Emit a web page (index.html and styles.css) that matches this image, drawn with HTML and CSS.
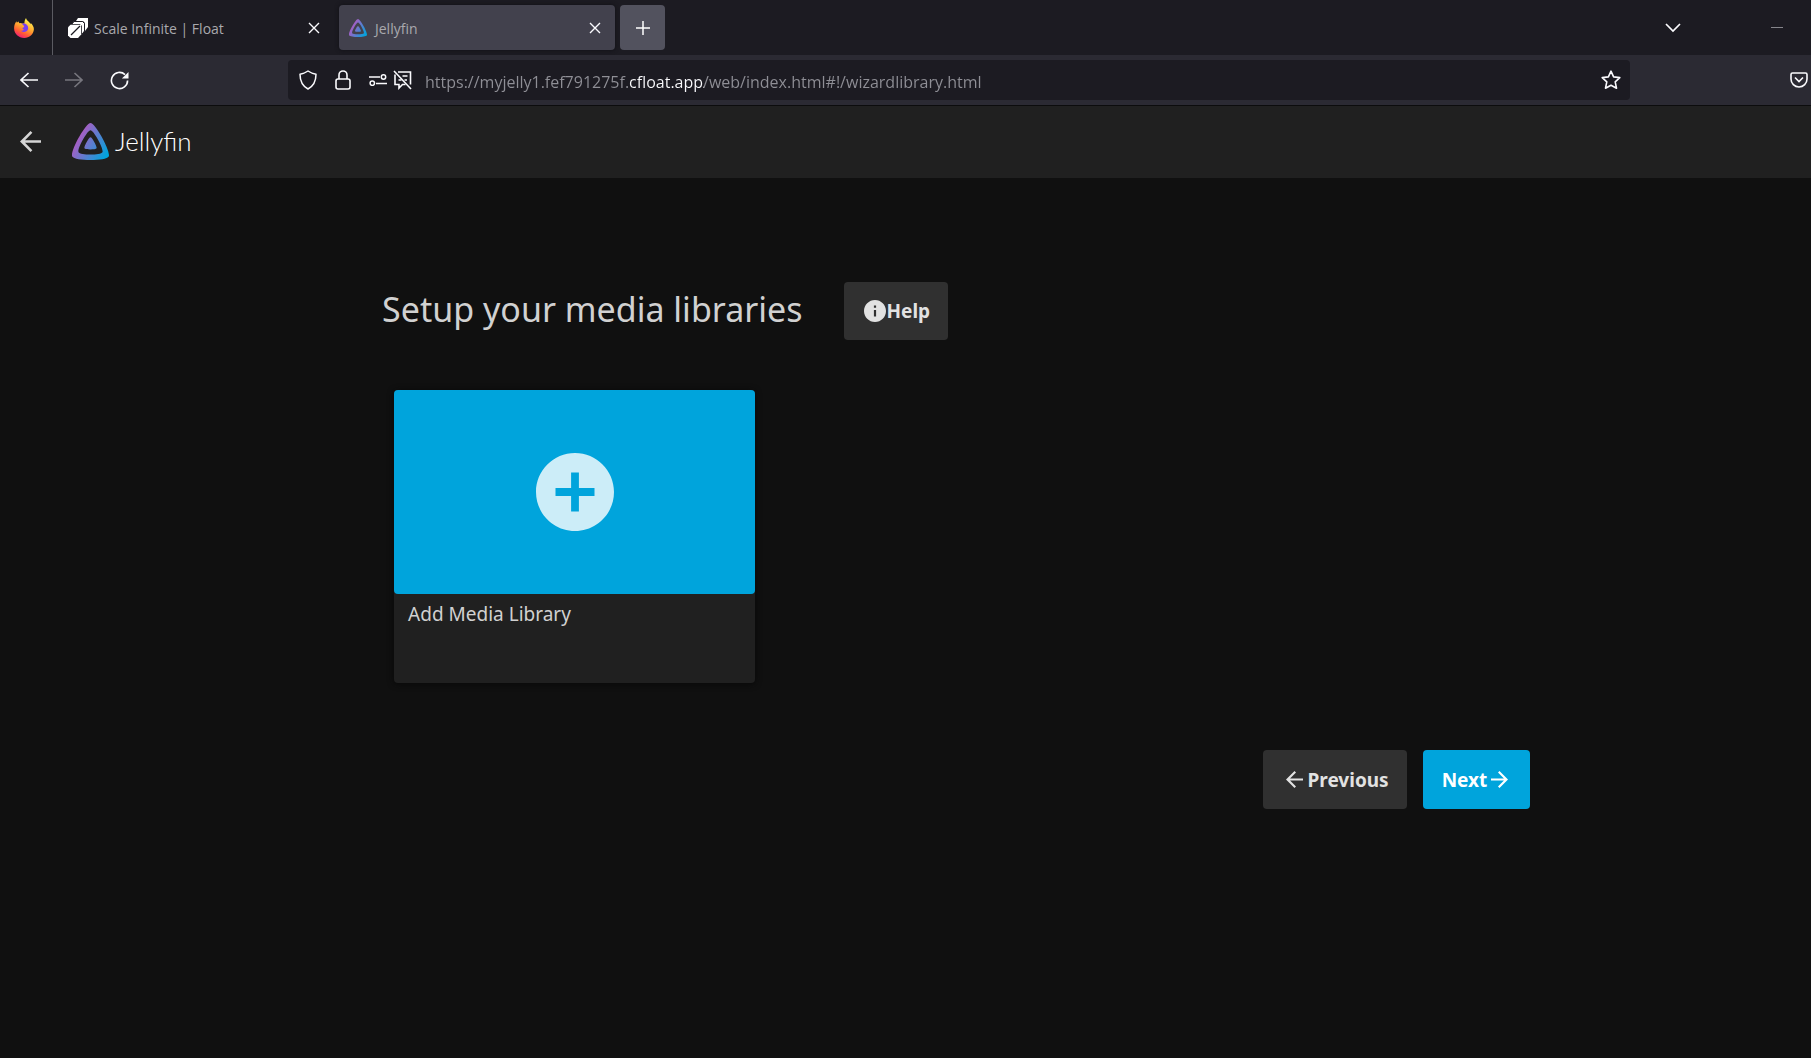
FILE: index.html
```html
<!DOCTYPE html>
<html lang="en">
<head>
<meta charset="utf-8">
<meta name="viewport" content="width=device-width, initial-scale=1">
<title>Jellyfin</title>
<link rel="stylesheet" href="styles.css">
</head>
<body>
<svg class="defs" width="0" height="0" aria-hidden="true">
  <defs>
    <linearGradient id="jelly" gradientUnits="userSpaceOnUse" x1="4" y1="9" x2="23" y2="20">
      <stop offset="0" stop-color="#aa5cc3"/><stop offset="1" stop-color="#00a4dc"/>
    </linearGradient>
    <linearGradient id="fire" x1="0.8" y1="0" x2="0.3" y2="1">
      <stop offset="0.1" stop-color="#fff44f"/><stop offset="0.5" stop-color="#ffa22e"/><stop offset="0.75" stop-color="#ff5a36"/><stop offset="1" stop-color="#f0197a"/>
    </linearGradient>
    <symbol id="jelly-mark" viewBox="0 0 24 24">
      <path fill="url(#jelly)" d="M12 .002C8.826.002-1.398 18.537.16 21.666c1.56 3.129 22.14 3.094 23.682 0C25.384 18.573 15.177 0 12 0zm7.76 18.949c-1.008 2.028-14.493 2.05-15.514 0C3.224 16.9 9.92 4.755 12.003 4.755c2.081 0 8.77 12.166 7.759 14.196zM12 9.198c-1.054 0-4.446 6.15-3.93 7.189.518 1.04 7.348 1.027 7.86 0 .511-1.027-2.874-7.19-3.93-7.19z"/>
    </symbol>
    <symbol id="close" viewBox="0 0 12 12"><path d="M1 1l10 10M11 1L1 11" fill="none" stroke="currentColor" stroke-width="1.4"/></symbol>
  </defs>
</svg>

<div class="tabs">
  <button class="plain firefox" aria-label="Firefox View">
    <svg width="20" height="20" viewBox="0 0 20 20">
      <path fill="url(#fire)" d="M12 0c.4 1.700 1.600 2.700 3 4 .6.600 1.200 1.400 1.500 2.200l.2-1.200c1.800 1.600 3.300 4 3.200 6.300C19.600 16.400 15.400 20 10.200 20 4.600 20 .2 16 .1 10.600 0 8 .7 5.400 2.400 3.200l.5 1.600c.5-.7 1-1 1.700-1.400l.6 1.800c1.200-.3 2.300-.1 3.200.4h2C10.300 3.600 11 1.500 12 0z"/>
      <path fill="#7b3ff0" d="M8 6c2-.8 4-.3 5.200 1.200 1.600 2 1.200 4.800-.8 6.100-1.900 1.200-4.300.7-5.500-.9 1.400.5 2.600.2 3.300-.8-1.200-.2-1.700-.9-1.800-1.700l1.800-1c-.3-1.200-1-2-2.200-2.900z"/>
    </svg>
  </button>
  <div class="tab">
    <svg width="20" height="20" viewBox="0 0 20 20">
      <path d="M10 0h10v9l-3 4V5l-2-2H8z" fill="#fff"/>
      <path d="M6 3.500h8.500l2 2V13l-3 4V8l-1.500-1.500H3.500z" fill="#fff" stroke="#1c1b22"/>
      <path d="M2.500 6.800h10.700v9.700L10 20H2.500L0 17.500V9.300z" fill="#fff"/>
      <path d="M3 17L12 8" stroke="#1c1b22" stroke-width="1.300"/>
    </svg>
    <span class="tab-title">Scale Infinite | Float</span>
    <button class="plain" aria-label="Close Scale Infinite"><svg width="12" height="12"><use href="#close"/></svg></button>
  </div>
  <div class="tab active">
    <svg width="18" height="18"><use href="#jelly-mark"/></svg>
    <span class="tab-title">Jellyfin</span>
    <button class="plain" aria-label="Close Jellyfin"><svg width="12" height="12"><use href="#close"/></svg></button>
  </div>
  <button class="new-tab" aria-label="New tab"><svg width="16" height="16" viewBox="0 0 16 16"><path d="M8 1v14M1 8h14" stroke="#fff" stroke-width="1.500"/></svg></button>
  <div class="window-tools">
    <button class="plain" aria-label="List all tabs"><svg width="16" height="10" viewBox="0 0 16 10"><path d="M1 1l7 7 7-7" fill="none" stroke="currentColor" stroke-width="1.700"/></svg></button>
    <button class="plain" aria-label="Minimize"><svg width="12" height="2"><path d="M0 .5h12" stroke="#85858b"/></svg></button>
  </div>
</div>

<div class="toolbar">
  <div class="nav">
    <button class="plain" aria-label="Back"><svg width="18" height="18" viewBox="0 0 18 18"><path d="M18 9H1M8.500 2l-7.500 7 7.500 7" fill="none" stroke="currentColor" stroke-width="1.600"/></svg></button>
    <button class="plain dim" aria-label="Forward" disabled><svg width="18" height="18" viewBox="0 0 18 18"><path d="M0 9h17M9.500 2l7.500 7-7.500 7" fill="none" stroke="currentColor" stroke-width="1.600"/></svg></button>
    <button class="plain" aria-label="Reload"><svg width="19" height="19" viewBox="0 0 20 20"><path d="M18.500 10a8.500 8.500 0 1 1-2.700-6.200" fill="none" stroke="currentColor" stroke-width="1.700"/><path d="M19.500 1v7h-7z" fill="currentColor"/></svg></button>
  </div>
  <div class="url-bar">
    <svg width="18" height="20" viewBox="0 0 18 20"><path d="M9 1c2.500 1.700 5 2.700 8 3.200 0 6.500-2 11.500-8 14.800C3 15.700 1 10.700 1 4.200 4 3.700 6.500 2.700 9 1z" fill="none" stroke="currentColor" stroke-width="1.500" stroke-linejoin="round"/></svg>
    <svg class="lock" width="16" height="20" viewBox="0 0 16 20"><path d="M4 9V5a4 4 0 0 1 8 0v4" fill="none" stroke="currentColor" stroke-width="1.600"/><rect x="1" y="9" width="14" height="10" rx="2" fill="none" stroke="currentColor" stroke-width="1.600"/></svg>
    <svg class="perms" width="18" height="12" viewBox="0 0 18 12"><path d="M0 3h11M7 9.500h11" stroke="currentColor" stroke-width="1.500"/><circle cx="14.500" cy="3" r="2.200" fill="none" stroke="currentColor" stroke-width="1.500"/><circle cx="3.300" cy="9.200" r="2.200" fill="none" stroke="currentColor" stroke-width="1.500"/></svg>
    <svg class="muted" width="20" height="20" viewBox="0 0 20 20"><path d="M5 2h12.500v12.500M2 4.500v10h4v3.500l3.500-3.500h3M9.500 6h5M5.500 10h3M11.500 10h2.500" fill="none" stroke="currentColor" stroke-width="1.600"/><path d="M1 1l17 18" stroke="currentColor" stroke-width="1.600"/></svg>
    <input class="url" type="text" aria-label="Address" spellcheck="false" value="https://myjelly1.fef791275f.cfloat.app/web/index.html#!/wizardlibrary.html">
    <button class="plain" aria-label="Bookmark this page"><svg width="20" height="20" viewBox="0 0 20 20"><path d="M10 1.200l2.600 5.700 6.200.7-4.600 4.200 1.300 6.400L10 15.200l-5.500 3 1.300-6.400-4.600-4.200 6.200-.7z" fill="none" stroke="currentColor" stroke-width="1.600" stroke-linejoin="round"/></svg></button>
  </div>
  <button class="plain" aria-label="Save to Pocket"><svg width="18" height="16" viewBox="0 0 18 16"><path d="M2.500 1h13A1.500 1.500 0 0 1 17 2.500V7A8 8 0 0 1 1 7V2.500A1.500 1.500 0 0 1 2.500 1z" fill="none" stroke="currentColor" stroke-width="1.600"/><path d="M5 5.500l4 4 4-4" fill="none" stroke="currentColor" stroke-width="1.600"/></svg></button>
</div>

<header class="header">
  <button class="plain" aria-label="Go back"><svg width="21" height="21" viewBox="4 4 16 16"><path fill="currentColor" d="M20 11H7.830l5.590-5.590L12 4l-8 8 8 8 1.410-1.410L7.830 13H20v-2z"/></svg></button>
  <a class="brand" href="#">
    <svg width="37" height="37"><use href="#jelly-mark"/></svg>
    <span>Jellyfin</span>
  </a>
</header>

<main class="wizard">
  <div class="title-row">
    <h1>Setup your media libraries</h1>
    <a class="btn help" href="#"><svg width="22" height="22" viewBox="2 2 20 20"><path fill="currentColor" d="M12 2C6.480 2 2 6.480 2 12s4.480 10 10 10 10-4.480 10-10S17.520 2 12 2zm1 15h-2v-6h2v6zm0-8h-2V7h2v2z"/></svg>Help</a>
  </div>
  <button class="card">
    <span class="card-image"><svg width="78" height="78" viewBox="2 2 20 20"><path fill="#fff" fill-opacity=".8" d="M12 2C6.480 2 2 6.480 2 12s4.480 10 10 10 10-4.480 10-10S17.520 2 12 2zm5 11h-4v4h-2v-4H7v-2h4V7h2v4h4v2z"/></svg></span>
    <span class="card-text">Add Media Library</span>
  </button>
  <div class="actions">
    <button class="btn"><svg width="17" height="17" viewBox="4 4 16 16"><path fill="currentColor" d="M20 11H7.830l5.590-5.590L12 4l-8 8 8 8 1.410-1.410L7.830 13H20v-2z"/></svg>Previous</button>
    <button class="btn next">Next<svg width="17" height="17" viewBox="4 4 16 16"><path fill="currentColor" d="M12 4l-1.410 1.410L16.170 11H4v2h12.170l-5.580 5.590L12 20l8-8z"/></svg></button>
  </div>
</main>
</body>
</html>
```

FILE: styles.css
```css
* { box-sizing: border-box; }

body {
  margin: 0;
  background: #101010;
  color: #d1d1d1;
  font-family: "Noto Sans", sans-serif;
}

svg { display: block; flex: none; }
.defs { position: absolute; }

button { font: inherit; border: 0; cursor: pointer; }
a { color: inherit; text-decoration: none; }

.plain {
  display: flex;
  align-items: center;
  justify-content: center;
  padding: 0;
  background: none;
  color: #fbfbfe;
}
.dim { color: #77767e; }

/* Browser tabs */
.tabs {
  display: flex;
  align-items: center;
  height: 55px;
  background: #1c1b22;
}
.firefox {
  align-self: stretch;
  width: 53px;
  padding-right: 4px;
  border-right: 1px solid #5b5b62;
}
.tab {
  display: flex;
  align-items: center;
  gap: 6px;
  width: 276px;
  height: 45px;
  margin-left: 5px;
  padding: 0 14px 0 10px;
  border-radius: 4px;
  color: #a9a9ad;
  font-family: "Open Sans", sans-serif;
  font-size: 14px;
}
.tab.active {
  gap: 8px;
  background: #42414d;
  box-shadow: 0 0 4px #101014;
}
.tab-title { flex: 1; padding-top: 2px; }
.new-tab {
  display: grid;
  place-items: center;
  width: 45px;
  height: 45px;
  margin-left: 5px;
  padding: 0;
  border-radius: 4px;
  background: #52525e;
}
.window-tools {
  display: flex;
  align-items: center;
  gap: 90px;
  margin-left: auto;
  padding-right: 28px;
}

/* Browser toolbar */
.toolbar {
  display: flex;
  align-items: center;
  height: 51px;
  padding: 0 3px 0 20px;
  background: #2b2a33;
  border-bottom: 1px solid #0c0c0d;
}
.nav { display: flex; align-items: center; gap: 27px; }
.url-bar {
  flex: 1;
  display: flex;
  align-items: center;
  height: 40px;
  margin: 0 160px 0 159px;
  padding: 0 9px 0 11px;
  border-radius: 4px;
  background: #1c1b22;
  color: #fbfbfe;
}
.lock { margin-left: 18px; }
.perms { margin-left: 18px; }
.muted { margin-left: 6px; }
.url {
  flex: 1;
  min-width: 0;
  height: 40px;
  margin-left: 12px;
  padding: 4px 0 0;
  border: 0;
  outline: 0;
  /* The site's domain is brighter than the rest of the address. */
  background: linear-gradient(90deg, #8f8f96 205px, #fbfbfe 205px 279px, #8f8f96 279px);
  background-clip: text;
  -webkit-background-clip: text;
  color: transparent;
  font-family: "Open Sans", sans-serif;
  font-size: 16px;
}

/* Application header */
.header {
  display: flex;
  align-items: center;
  gap: 31px;
  height: 72px;
  padding: 0 20px 2px;
  background: #202020;
}
.header .plain { color: #d5d5d5; }
.brand {
  display: flex;
  align-items: center;
  gap: 6px;
  color: #fff;
  font-family: Lato, sans-serif;
  font-size: 26px;
  font-weight: 300;
}

/* Setup wizard */
.wizard { padding: 104px 15.5% 40px 21.1%; }
.title-row { display: flex; align-items: center; gap: 41px; }
h1 {
  margin: 0;
  padding-bottom: 4px;
  font-size: 34px;
  font-weight: 400;
  line-height: 44px;
}
.btn {
  display: flex;
  align-items: center;
  gap: 4px;
  height: 59px;
  padding: 0 18px 0 23px;
  border-radius: 4px;
  background: #303030;
  color: #e2e2e2;
  font-size: 19px;
  font-weight: 700;
}
.help { gap: 1px; height: 58px; padding: 0 18px 0 20px; }
.card {
  display: flex;
  flex-direction: column;
  width: 361px;
  margin: 50px 0 0 12px;
  padding: 0;
  border-radius: 4px;
  background: #202020;
  color: #d1d1d1;
  box-shadow: 0 1px 6px #080808;
  text-align: left;
}
.card-image {
  display: grid;
  place-items: center;
  width: 100%;
  height: 204px;
  border-radius: 4px;
  background: #00a4dc;
}
.card-text {
  padding: 6px 14px 55px;
  font-size: 19px;
  line-height: 28px;
}
.actions {
  display: flex;
  justify-content: flex-end;
  gap: 16px;
  margin-top: 67px;
}
.next {
  padding: 0 22px 0 19px;
  background: #00a4dc;
  color: #fff;
}
```
